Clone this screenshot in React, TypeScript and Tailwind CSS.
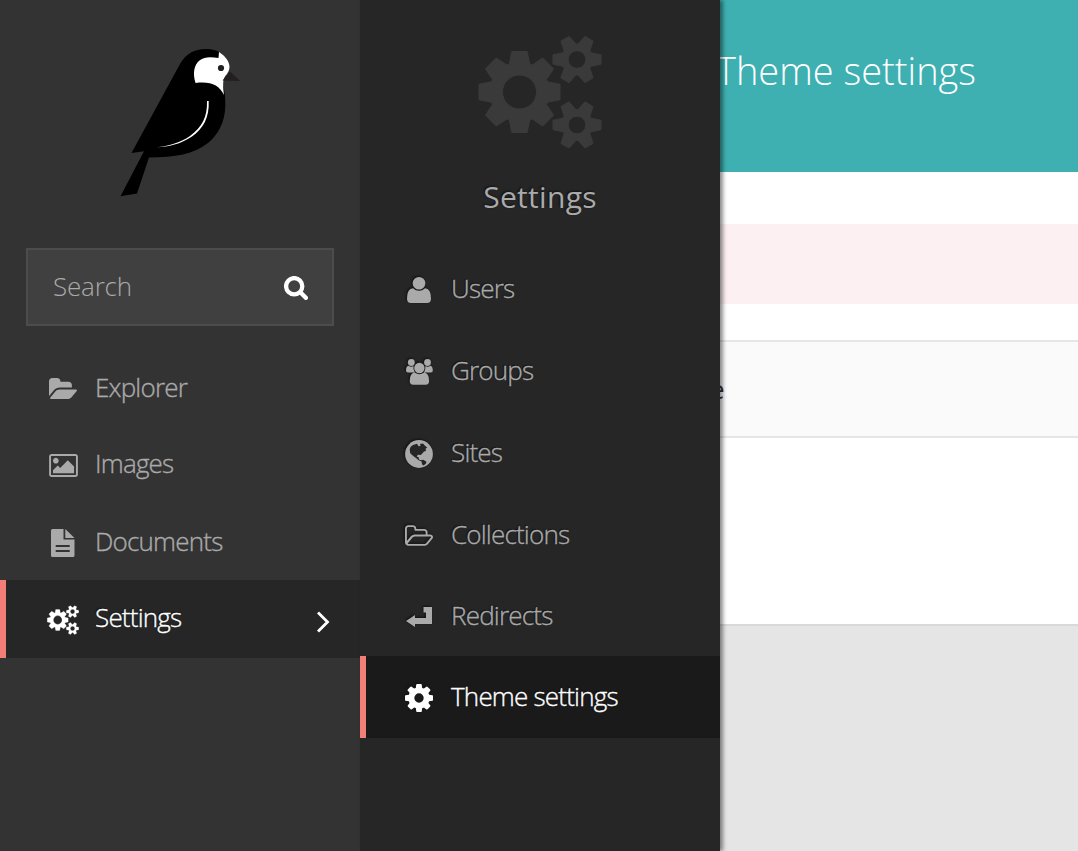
import React from "react";

type IconProps = { className?: string };

const gearPath = (cx: number, cy: number, teeth: number, outer: number, root: number, topHalf: number, baseHalf: number, hole: number) => {
  const pts: string[] = [];
  for (let i = 0; i < teeth; i++) {
    const a = (i / teeth) * Math.PI * 2;
    const c = Math.cos(a);
    const s = Math.sin(a);
    [[root, -baseHalf], [outer, -topHalf], [outer, topHalf], [root, baseHalf]].forEach(([x, y]) =>
      pts.push(`${(cx + x * c - y * s).toFixed(2)} ${(cy + x * s + y * c).toFixed(2)}`)
    );
  }
  return `M${pts.join("L")}Z M${cx - hole} ${cy}a${hole} ${hole} 0 1 0 ${hole * 2} 0a${hole} ${hole} 0 1 0 ${-hole * 2} 0Z`;
};

const Cogs = ({ className }: IconProps) => (
  <svg viewBox="0 0 124 114" className={className} fill="currentColor" fillRule="evenodd" stroke="currentColor" strokeWidth="1" strokeLinejoin="round">
    <path d={gearPath(41.5, 57, 8, 40.5, 28, 7.7, 10.2, 17)} />
    <path d={gearPath(99, 24.5, 6, 24, 14, 4.7, 6.8, 8.8)} />
    <path d={gearPath(99, 90, 6, 24, 14, 4.7, 6.8, 8.8)} />
  </svg>
);

const Wagtail = () => (
  <svg viewBox="0 0 160 180" className="h-[180px] w-[160px]">
    <path d="M31.5 123 L80 34 C86 23 96 18.5 107 19 C112 19.300 116 20.200 119 22 L121 50 C124 56 125.500 64 125.300 76 C125 92 118 105 108 113 C94 124 75 127.500 49 127.500 L37 163.500 L20.500 166.300 L44 121.200 Z" fill="#000" />
    <path d="M119 22 C123.500 25 128 29 129.300 35 C130.200 40 127.500 43.500 125 46.500 C122.500 50 123 57 124 65 C119 55 111 51.200 95.500 53 C92.500 43 94 35 99.500 30.500 C104.500 26.500 111 27 118.500 28 Z" fill="#fff" />
    <circle cx="121" cy="38" r="3.100" fill="#231f20" />
    <path d="M130 41.500 L140 51 L122.500 50.500 Z" fill="#231f20" />
    <path d="M107 71 L108.700 71 C109.500 88 103 98.500 92 106.500 C81 114 68 117 57 117.300 C68 116 80 113 90 106 C102 97 107.500 87 107 71 Z" fill="#fff" />
  </svg>
);

const Search = ({ className }: IconProps) => (
  <svg viewBox="0 0 24 24" className={className} fill="none" stroke="currentColor" strokeLinecap="round">
    <circle cx="10.200" cy="10.200" r="8.100" strokeWidth="4.300" />
    <path d="M16.800 16.800l5 5" strokeWidth="4.400" />
  </svg>
);

const Explorer = ({ className }: IconProps) => (
  <svg viewBox="0 0 1879 1792" className={className} fill="currentColor">
    <path d="M1879 952q0 31-31 66l-336 396q-43 51-120.500 86.500t-143.500 35.500h-1088q-34 0-60.500-13t-26.500-43q0-31 31-66l336-396q43-51 120.500-86.500t143.500-35.500h1088q34 0 60.500 13t26.500 43zm-343-344v160h-832q-94 0-197 47.500t-164 119.500l-337 396-5 6q0-4-.5-12.500t-.5-12.500v-960q0-92 66-158t158-66h320q92 0 158 66t66 158v32h544q92 0 158 66t66 158z" />
  </svg>
);

const Picture = ({ className }: IconProps) => (
  <svg viewBox="-64 128 1920 1536" className={className} fill="currentColor">
    <path d="M576 576q0 80-56 136t-136 56-136-56-56-136 56-136 136-56 136 56 56 136zm1024 384v448h-1408v-192l320-320 160 160 512-512zm96-704h-1600q-13 0-22.500 9.500t-9.500 22.500v1216q0 13 9.500 22.500t22.500 9.500h1600q13 0 22.500-9.500t9.500-22.500v-1216q0-13-9.500-22.500t-22.500-9.500zm160 32v1216q0 66-47 113t-113 47h-1600q-66 0-113-47t-47-113v-1216q0-66 47-113t113-47h1600q66 0 113 47t47 113z" />
  </svg>
);

const Doc = ({ className }: IconProps) => (
  <svg viewBox="0 0 24 28" className={className} fill="currentColor" fillRule="evenodd">
    <path d="M1.500 0H12.500v10.500h11V26.500a1.500 1.500 0 0 1-1.500 1.500H1.500A1.500 1.500 0 0 1 0 26.500v-25A1.500 1.500 0 0 1 1.500 0ZM4.700 16v2h14v-2ZM4.700 21v2h14v-2ZM14.300 0l9.200 9H14.300Z" />
  </svg>
);

const User = ({ className }: IconProps) => (
  <svg viewBox="0 0 24 26" className={className} fill="currentColor">
    <circle cx="12" cy="6.300" r="6.300" />
    <path d="M6 11.300q2.600 2.500 6 2.500t6-2.500q6 .4 6 10.200 0 4.500-4 4.500H4q-4 0-4-4.500 0-9.800 6-10.200Z" />
  </svg>
);

const Group = ({ className }: IconProps) => (
  <svg viewBox="0 0 27 26" className={className} fill="currentColor">
    <circle cx="5.300" cy="3.500" r="3.400" />
    <circle cx="21.500" cy="3.500" r="3.400" />
    <circle cx="13.400" cy="9" r="5.200" />
    <path d="M2.300 6.800q3 1.500 5.200.3-.7 3.700 1.300 6.400H2q-2 0-2-2 0-4 2.300-4.700ZM24.500 6.800q-3 1.500-5.200.3.700 3.700-1.300 6.400h6.800q2 0 2-2 0-4-2.300-4.700ZM8.700 13.500q4.700 3.300 9.400 0 5 .5 5 8.500 0 3.700-3.500 3.700H7.200q-3.500 0-3.500-3.700 0-8 5-8.500Z" />
  </svg>
);

const Globe = ({ className }: IconProps) => (
  <svg viewBox="0 0 28 28" className={className}>
    <circle cx="14" cy="14" r="13.900" fill="currentColor" />
    <path d="M4.700 9.500L5.700 6.700 8 5l4-1.200 1.500 2.400L15.500 6l-.5-2 3-.5 2 2.300 2.200 1.700-1.600 1.300L21 11l-2 .6-1.500 1.600L15.800 15l-3-.2-1.100 1.900 1.800.4.500 2.500 2 .6 2.200-.5 3.300 2-.8 2.200-2.400 1.700-1.300-1.400-.4-2.700-2.900-1.200-2.700-2.200-2.500-1.900L5.200 13.200Z" fill="#262626" />
  </svg>
);

const Collections = ({ className }: IconProps) => (
  <svg viewBox="0 0 1909 1792" className={className} fill="currentColor">
    <path d="M1781 927q0-23-34-23h-1088q-40 0-85.500 21.500t-71.500 52.500l-294 363q-18 24-18 40 0 23 34 23h1088q40 0 86-22t71-53l294-363q18-22 18-39zm-1141-159h768v-160q0-40-28-68t-68-28h-576q-40 0-68-28t-28-68v-64q0-40-28-68t-68-28h-320q-40 0-68 28t-28 68v853l256-315q44-53 116-87.500t140-34.500zm1269 159q0 62-46 120l-295 363q-43 53-116 87.500t-140 34.500h-1088q-92 0-158-66t-66-158v-960q0-92 66-158t158-66h320q92 0 158 66t66 158v32h544q92 0 158 66t66 158v160h192q54 0 99 24.500t67 70.500q15 32 15 68z" />
  </svg>
);

const Redirect = ({ className }: IconProps) => (
  <svg viewBox="0 0 26 20" className={className} fill="currentColor">
    <path d="M17.500 0H26v17H9v3L0 14l9-6v3h11V5.500h-2.500Z" />
  </svg>
);

const Cog = ({ className }: IconProps) => (
  <svg viewBox="0 128 1536 1536" className={className} fill="currentColor">
    <path d="M1024 896q0-106-75-181t-181-75-181 75-75 181 75 181 181 75 181-75 75-181zm512-109v222q0 12-8 23t-20 13l-185 28q-19 54-39 91 35 50 107 138 10 12 10 25t-9 23q-27 37-99 108t-94 71q-12 0-26-9l-138-108q-44 23-91 38-16 136-29 186-7 28-36 28h-222q-14 0-24.500-8.500t-11.500-21.500l-28-184q-49-16-90-37l-141 107q-10 9-25 9-14 0-25-11-126-114-165-168-7-10-7-23 0-12 8-23 15-21 51-66.500t54-70.500q-27-50-41-99l-183-27q-13-2-21-12.500t-8-23.500v-222q0-12 8-23t19-13l186-28q14-46 39-92-40-57-107-138-10-12-10-24 0-10 9-23 26-36 98.500-107.500t94.500-71.500q13 0 26 10l138 107q44-23 91-38 16-136 29-186 7-28 36-28h222q14 0 24.500 8.500t11.500 21.500l28 184q49 16 90 37l142-107q9-9 24-9 13 0 25 10 129 119 165 170 7 8 7 22 0 12-8 23-15 21-51 66.500t-54 70.500q26 50 41 98l183 28q13 2 21 12.500t8 23.500z" />
  </svg>
);

type ItemProps = { icon: React.ReactNode; label: string; row: string; text: string };

const MenuItem = ({ icon, label, row, text }: ItemProps) => (
  <a className={`flex items-center ${row}`}>
    <span className="flex w-8 justify-center pt-1">{icon}</span>
    <span className={`tracking-[-0.8px] whitespace-nowrap [-webkit-text-stroke:0.35px_currentColor] ${text}`}>{label}</span>
  </a>
);

export default function App() {
  return (
    <div className="flex h-[851px] w-[1078px] overflow-hidden bg-[#e5e5e5] font-['Open_Sans','Noto_Sans',sans-serif] antialiased">
      <aside className="flex w-[360px] shrink-0 flex-col bg-[#333] text-[#aaa]">
        <div className="flex h-[248px] pt-[30px] pl-[100px]">
          <Wagtail />
        </div>
        <div className="mx-[26px] flex h-[78px] items-center justify-between border-2 border-[#4c4c4c] bg-[#404040] pr-6 pb-0.5 pl-[25px]">
          <span className="text-[26px] font-light tracking-[-0.2px]">Search</span>
          <Search className="mt-1 h-6 w-6 text-white" />
        </div>
        <nav className="mt-6 flex flex-col text-[26px] font-light">
          <MenuItem icon={<Explorer className="h-[27px] w-7" />} label="Explorer" row="h-[76px] pb-0.5 pl-[47px]" text="ml-4" />
          <MenuItem icon={<Picture className="h-[23px] w-[29px]" />} label="Images" row="h-[76px] pb-0.5 pl-[47px]" text="ml-4" />
          <MenuItem icon={<Doc className="h-7 w-6" />} label="Documents" row="h-[78px] pl-[47px]" text="ml-4" />
          <a className="flex h-[78px] items-center border-l-[6px] border-[#f37e77] bg-[#262626] pr-[30px] pb-1 pl-[41px] text-white">
            <Cogs className="mt-1.5 h-[30px] w-8" />
            <span className="ml-4 flex-1 tracking-[-0.8px] [-webkit-text-stroke:0.35px_currentColor] [text-shadow:-1px_-1px_1px_#111]">Settings</span>
            <svg viewBox="0 0 14 22" className="mt-2.5 h-[22px] w-[14px]" fill="none" stroke="currentColor" strokeWidth="2.8">
              <path d="M2 1.500l9.500 9.500L2 20.500" />
            </svg>
          </a>
        </nav>
      </aside>
      <aside className="relative z-10 flex w-[360px] shrink-0 flex-col bg-[#262626] text-[#aaa] shadow-[3px_0_4px_rgba(0,0,0,0.45)]">
        <div className="flex h-[248px] flex-col items-center pt-[35px]">
          <Cogs className="h-[114px] w-[124px] text-[#3a3a3a]" />
          <h2 className="mt-[25px] text-[30px] leading-[46px] tracking-[0.3px] [text-shadow:-1px_-1px_2px_#111]">Settings</h2>
        </div>
        <nav className="flex flex-col text-[26px] font-light [text-shadow:-1px_-1px_1px_#111] [&_svg]:drop-shadow-[-1px_-1px_1px_#111]">
          <MenuItem icon={<User className="h-[26px] w-6" />} label="Users" row="h-[82px] pb-0.5 pl-[43px]" text="ml-4" />
          <MenuItem icon={<Group className="h-[26px] w-[27px]" />} label="Groups" row="h-[82px] pb-0.5 pl-[43px]" text="ml-4" />
          <MenuItem icon={<Globe className="h-7 w-7" />} label="Sites" row="h-[82px] pb-0.5 pl-[43px]" text="ml-4" />
          <MenuItem icon={<Collections className="h-[27px] w-[28px]" />} label="Collections" row="h-[82px] pb-0.5 pl-[43px]" text="ml-4" />
          <MenuItem icon={<Redirect className="h-5 w-[26px]" />} label="Redirects" row="h-20 pb-0.5 pl-[43px]" text="ml-4" />
          <MenuItem icon={<Cog className="h-7 w-7" />} label="Theme settings" row="h-[82px] border-l-[6px] border-[#f37e77] bg-[#1a1a1a] pb-0.5 pl-[37px] text-white" text="ml-4" />
        </nav>
      </aside>
      <main className="flex min-w-0 flex-1 flex-col">
        <header className="h-[172px] bg-[#3eb0b1] pt-[43px] text-white">
          <h1 className="-ml-1 text-[38px] leading-[54px] font-light whitespace-nowrap">Theme settings</h1>
        </header>
        <div className="h-[454px] border-b-2 border-[#d9d9d9] bg-white pt-[52px]">
          <div className="h-20 bg-[#fcf0f2]" />
          <div className="mt-9 flex h-[98px] items-center border-y-2 border-[#e6e6e6] bg-[#fafafa]">
            <span className="-ml-[10px] text-[26px] text-[#333]">e</span>
          </div>
        </div>
      </main>
    </div>
  );
}
